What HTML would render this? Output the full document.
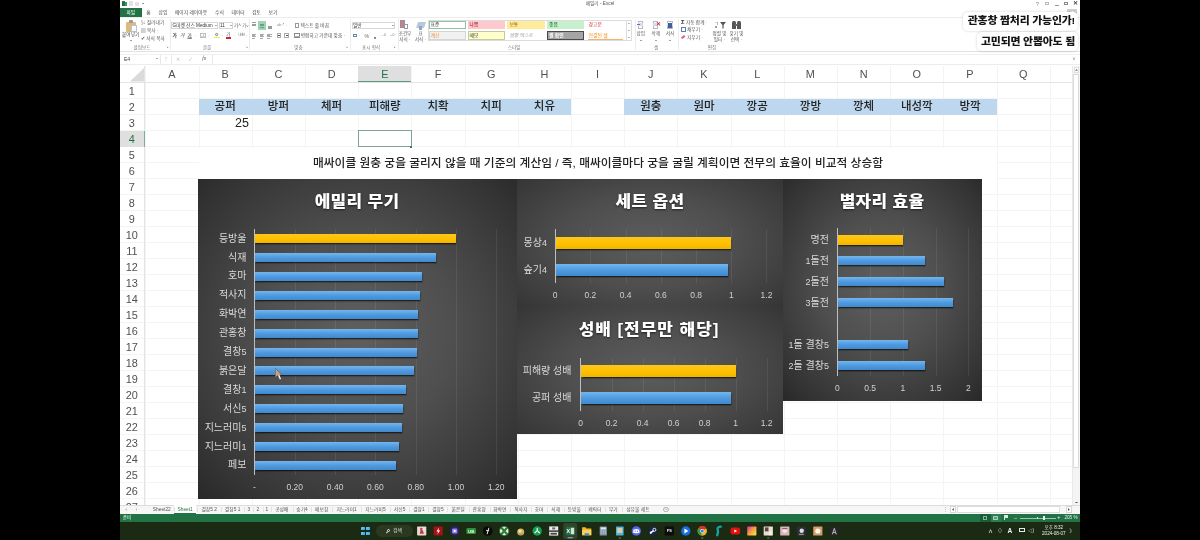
<!DOCTYPE html><html lang="ko"><head><meta charset="utf-8"><title>Excel</title><style>

html,body{margin:0;padding:0;background:#000;}
body{width:1200px;height:540px;position:relative;overflow:hidden;font-family:"Liberation Sans","Noto Sans CJK KR",sans-serif;}
.abs,.abs *{position:absolute;}
#win{position:absolute;left:120px;top:0;width:960px;height:540px;background:#fff;overflow:hidden;}
#fx{position:absolute;left:0;top:0;width:960px;height:540px;filter:blur(.35px);will-change:transform;}
#win div,#win span,#win svg{position:absolute;}
.t{white-space:nowrap;line-height:1;}
.c{transform:translate(-50%,-50%);}
.r{transform:translate(-100%,-50%);}
.l{transform:translate(0,-50%);}
.chart{background:#3a3a3a;overflow:hidden;}
.ctitle{color:#fff;font-weight:900;font-size:15.6px;text-shadow:0 1px 2px rgba(0,0,0,.6);letter-spacing:.27px}
.t.c.ctitle{transform:translate(-50%,-50%) scaleX(1.09);}
.cl{color:#d9d9d9;font-size:10px;}
.al{color:#d0d0d0;font-size:8.5px;}
#win .dg{position:static;font-size:.9em;font-weight:500;}
.bar{box-shadow:.5px 1.5px 1.5px rgba(0,0,0,.6);}
.by{background:linear-gradient(#ffc61a,#ffc000 60%,#f0b400);}
.bb{background:linear-gradient(#74b6ee,#4f9ae0 50%,#4189cc);}
.gl{background:rgba(255,255,255,.075);width:1px;}
.ax{background:#bebebe;width:1px;}
.colh{color:#505050;font-size:10.9px;}
.rowh{color:#505050;font-size:10.9px;}
.cell{color:#222;font-size:11.5px;font-weight:500;}
.rb{color:#555;font-size:4.6px;}

</style></head><body><div id="win"><div id="fx">
<div class="" style="left:0.0px;top:65.5px;width:960.0px;height:17.0px;background:#fff;"></div>
<div class="" style="left:25.4px;top:66.0px;width:1.0px;height:440.0px;background:#f4f4f4;"></div>
<div class="" style="left:78.6px;top:66.0px;width:1.0px;height:440.0px;background:#f4f4f4;"></div>
<div class="" style="left:131.8px;top:66.0px;width:1.0px;height:440.0px;background:#f4f4f4;"></div>
<div class="" style="left:185.0px;top:66.0px;width:1.0px;height:440.0px;background:#f4f4f4;"></div>
<div class="" style="left:238.2px;top:66.0px;width:1.0px;height:440.0px;background:#f4f4f4;"></div>
<div class="" style="left:291.4px;top:66.0px;width:1.0px;height:440.0px;background:#f4f4f4;"></div>
<div class="" style="left:344.6px;top:66.0px;width:1.0px;height:440.0px;background:#f4f4f4;"></div>
<div class="" style="left:397.8px;top:66.0px;width:1.0px;height:440.0px;background:#f4f4f4;"></div>
<div class="" style="left:451.0px;top:66.0px;width:1.0px;height:440.0px;background:#f4f4f4;"></div>
<div class="" style="left:504.2px;top:66.0px;width:1.0px;height:440.0px;background:#f4f4f4;"></div>
<div class="" style="left:557.4px;top:66.0px;width:1.0px;height:440.0px;background:#f4f4f4;"></div>
<div class="" style="left:610.6px;top:66.0px;width:1.0px;height:440.0px;background:#f4f4f4;"></div>
<div class="" style="left:663.8px;top:66.0px;width:1.0px;height:440.0px;background:#f4f4f4;"></div>
<div class="" style="left:717.0px;top:66.0px;width:1.0px;height:440.0px;background:#f4f4f4;"></div>
<div class="" style="left:770.2px;top:66.0px;width:1.0px;height:440.0px;background:#f4f4f4;"></div>
<div class="" style="left:823.4px;top:66.0px;width:1.0px;height:440.0px;background:#f4f4f4;"></div>
<div class="" style="left:876.6px;top:66.0px;width:1.0px;height:440.0px;background:#f4f4f4;"></div>
<div class="" style="left:929.8px;top:66.0px;width:1.0px;height:440.0px;background:#f4f4f4;"></div>
<div class="" style="left:0.0px;top:82.0px;width:953.0px;height:1.0px;background:#f4f4f4;"></div>
<div class="" style="left:0.0px;top:98.0px;width:953.0px;height:1.0px;background:#f4f4f4;"></div>
<div class="" style="left:0.0px;top:114.0px;width:953.0px;height:1.0px;background:#f4f4f4;"></div>
<div class="" style="left:0.0px;top:130.0px;width:953.0px;height:1.0px;background:#f4f4f4;"></div>
<div class="" style="left:0.0px;top:146.0px;width:953.0px;height:1.0px;background:#f4f4f4;"></div>
<div class="" style="left:0.0px;top:162.0px;width:953.0px;height:1.0px;background:#f4f4f4;"></div>
<div class="" style="left:0.0px;top:178.0px;width:953.0px;height:1.0px;background:#f4f4f4;"></div>
<div class="" style="left:0.0px;top:194.0px;width:953.0px;height:1.0px;background:#f4f4f4;"></div>
<div class="" style="left:0.0px;top:210.0px;width:953.0px;height:1.0px;background:#f4f4f4;"></div>
<div class="" style="left:0.0px;top:226.0px;width:953.0px;height:1.0px;background:#f4f4f4;"></div>
<div class="" style="left:0.0px;top:242.0px;width:953.0px;height:1.0px;background:#f4f4f4;"></div>
<div class="" style="left:0.0px;top:258.0px;width:953.0px;height:1.0px;background:#f4f4f4;"></div>
<div class="" style="left:0.0px;top:274.0px;width:953.0px;height:1.0px;background:#f4f4f4;"></div>
<div class="" style="left:0.0px;top:290.0px;width:953.0px;height:1.0px;background:#f4f4f4;"></div>
<div class="" style="left:0.0px;top:306.0px;width:953.0px;height:1.0px;background:#f4f4f4;"></div>
<div class="" style="left:0.0px;top:322.0px;width:953.0px;height:1.0px;background:#f4f4f4;"></div>
<div class="" style="left:0.0px;top:338.0px;width:953.0px;height:1.0px;background:#f4f4f4;"></div>
<div class="" style="left:0.0px;top:354.0px;width:953.0px;height:1.0px;background:#f4f4f4;"></div>
<div class="" style="left:0.0px;top:370.0px;width:953.0px;height:1.0px;background:#f4f4f4;"></div>
<div class="" style="left:0.0px;top:386.0px;width:953.0px;height:1.0px;background:#f4f4f4;"></div>
<div class="" style="left:0.0px;top:402.0px;width:953.0px;height:1.0px;background:#f4f4f4;"></div>
<div class="" style="left:0.0px;top:418.0px;width:953.0px;height:1.0px;background:#f4f4f4;"></div>
<div class="" style="left:0.0px;top:434.0px;width:953.0px;height:1.0px;background:#f4f4f4;"></div>
<div class="" style="left:0.0px;top:450.0px;width:953.0px;height:1.0px;background:#f4f4f4;"></div>
<div class="" style="left:0.0px;top:466.0px;width:953.0px;height:1.0px;background:#f4f4f4;"></div>
<div class="" style="left:0.0px;top:482.0px;width:953.0px;height:1.0px;background:#f4f4f4;"></div>
<div class="" style="left:0.0px;top:498.0px;width:953.0px;height:1.0px;background:#f4f4f4;"></div>
<div class="" style="left:0.0px;top:514.0px;width:953.0px;height:1.0px;background:#f4f4f4;"></div>
<div class="" style="left:0.0px;top:81.8px;width:953.0px;height:1.0px;background:#e4e4e4;"></div>
<div class="" style="left:24.4px;top:66.0px;width:1.0px;height:440.0px;background:#e4e4e4;"></div>
<span class="t c colh" style="left:52.0px;top:74.0px;">A</span>
<span class="t c colh" style="left:105.2px;top:74.0px;">B</span>
<span class="t c colh" style="left:158.4px;top:74.0px;">C</span>
<span class="t c colh" style="left:211.6px;top:74.0px;">D</span>
<div class="" style="left:238.2px;top:66.0px;width:53.2px;height:16.3px;background:#dfdfdf;border-bottom:1px solid #5f9a7c;box-sizing:border-box;"></div>
<span class="t c colh" style="left:264.8px;top:74.0px;color:#217346;font-weight:500;">E</span>
<span class="t c colh" style="left:318.0px;top:74.0px;">F</span>
<span class="t c colh" style="left:371.2px;top:74.0px;">G</span>
<span class="t c colh" style="left:424.4px;top:74.0px;">H</span>
<span class="t c colh" style="left:477.6px;top:74.0px;">I</span>
<span class="t c colh" style="left:530.8px;top:74.0px;">J</span>
<span class="t c colh" style="left:584.0px;top:74.0px;">K</span>
<span class="t c colh" style="left:637.2px;top:74.0px;">L</span>
<span class="t c colh" style="left:690.4px;top:74.0px;">M</span>
<span class="t c colh" style="left:743.6px;top:74.0px;">N</span>
<span class="t c colh" style="left:796.8px;top:74.0px;">O</span>
<span class="t c colh" style="left:850.0px;top:74.0px;">P</span>
<span class="t c colh" style="left:903.2px;top:74.0px;">Q</span>
<span class="t c rowh" style="left:11.8px;top:90.8px;">1</span>
<span class="t c rowh" style="left:11.8px;top:106.8px;">2</span>
<span class="t c rowh" style="left:11.8px;top:122.8px;">3</span>
<div class="" style="left:0.0px;top:130.5px;width:24.5px;height:16.0px;background:#dfdfdf;border-right:1px solid #7fae95;box-sizing:border-box;"></div>
<span class="t c rowh" style="left:11.8px;top:138.8px;color:#217346;font-weight:500;">4</span>
<span class="t c rowh" style="left:11.8px;top:154.8px;">5</span>
<span class="t c rowh" style="left:11.8px;top:170.8px;">6</span>
<span class="t c rowh" style="left:11.8px;top:186.8px;">7</span>
<span class="t c rowh" style="left:11.8px;top:202.8px;">8</span>
<span class="t c rowh" style="left:11.8px;top:218.8px;">9</span>
<span class="t c rowh" style="left:11.8px;top:234.8px;">10</span>
<span class="t c rowh" style="left:11.8px;top:250.8px;">11</span>
<span class="t c rowh" style="left:11.8px;top:266.8px;">12</span>
<span class="t c rowh" style="left:11.8px;top:282.8px;">13</span>
<span class="t c rowh" style="left:11.8px;top:298.8px;">14</span>
<span class="t c rowh" style="left:11.8px;top:314.8px;">15</span>
<span class="t c rowh" style="left:11.8px;top:330.8px;">16</span>
<span class="t c rowh" style="left:11.8px;top:346.8px;">17</span>
<span class="t c rowh" style="left:11.8px;top:362.8px;">18</span>
<span class="t c rowh" style="left:11.8px;top:378.8px;">19</span>
<span class="t c rowh" style="left:11.8px;top:394.8px;">20</span>
<span class="t c rowh" style="left:11.8px;top:410.8px;">21</span>
<span class="t c rowh" style="left:11.8px;top:426.8px;">22</span>
<span class="t c rowh" style="left:11.8px;top:442.8px;">23</span>
<span class="t c rowh" style="left:11.8px;top:458.8px;">24</span>
<span class="t c rowh" style="left:11.8px;top:474.8px;">25</span>
<span class="t c rowh" style="left:11.8px;top:490.8px;">26</span>
<span class="t c rowh" style="left:11.8px;top:506.8px;">27</span>
<svg style="left:9.8px;top:68.4px" width="14" height="13.4" viewBox="0 0 14 13.4"><path d="M14 0V13.4H0Z" fill="#dadada"/></svg>
<div class="" style="left:78.6px;top:98.8px;width:372.4px;height:16.0px;background:#bdd7ee;"></div>
<div class="" style="left:504.2px;top:98.8px;width:372.4px;height:16.0px;background:#bdd7ee;"></div>
<span class="t c cell" style="left:105.2px;top:107.0px;">공퍼</span>
<span class="t c cell" style="left:158.4px;top:107.0px;">방퍼</span>
<span class="t c cell" style="left:211.6px;top:107.0px;">체퍼</span>
<span class="t c cell" style="left:264.8px;top:107.0px;">피해량</span>
<span class="t c cell" style="left:318.0px;top:107.0px;">치확</span>
<span class="t c cell" style="left:371.2px;top:107.0px;">치피</span>
<span class="t c cell" style="left:424.4px;top:107.0px;">치유</span>
<span class="t c cell" style="left:530.8px;top:107.0px;">원충</span>
<span class="t c cell" style="left:584.0px;top:107.0px;">원마</span>
<span class="t c cell" style="left:637.2px;top:107.0px;">깡공</span>
<span class="t c cell" style="left:690.4px;top:107.0px;">깡방</span>
<span class="t c cell" style="left:743.6px;top:107.0px;">깡체</span>
<span class="t c cell" style="left:796.8px;top:107.0px;">내성깍</span>
<span class="t c cell" style="left:850.0px;top:107.0px;">방깍</span>
<span class="t r cell" style="left:129.0px;top:123.0px;font-size:12.5px;font-weight:400;">25</span>
<div class="" style="left:79.4px;top:147.5px;width:797.2px;height:31.0px;background:#fff;"></div>
<span class="t c cell" style="left:478.0px;top:162.7px;font-size:11.75px;">매싸이클 원충 궁을 굴리지 않을 때 기준의 계산임 / 즉, 매싸이클마다 궁을 굴릴 계획이면 전무의 효율이 비교적 상승함</span>
<div class="" style="left:237.7px;top:130.0px;width:54.2px;height:17.0px;border:1px solid #7fa391;box-sizing:border-box;background:#fff;"></div>
<div class="" style="left:290.4px;top:145.5px;width:2.0px;height:2.0px;background:#3f7a5a;"></div>
<div class="chart" style="left:78.3px;top:178.5px;width:319.0px;height:320.0px;background:radial-gradient(ellipse 75% 75% at 50% 48%,#5f5f5f 0%,#4f4f4f 40%,#333333 82%,#252525 100%);">
<span class="t c ctitle" style="left:158.7px;top:23.0px;">에밀리 무기</span>
<div class="gl" style="left:96.5px;top:50.5px;width:1.0px;height:246.0px;"></div>
<div class="gl" style="left:136.8px;top:50.5px;width:1.0px;height:246.0px;"></div>
<div class="gl" style="left:177.1px;top:50.5px;width:1.0px;height:246.0px;"></div>
<div class="gl" style="left:217.4px;top:50.5px;width:1.0px;height:246.0px;"></div>
<div class="gl" style="left:257.7px;top:50.5px;width:1.0px;height:246.0px;"></div>
<div class="gl" style="left:298.0px;top:50.5px;width:1.0px;height:246.0px;"></div>
<div class="bar by" style="left:56.2px;top:55.6px;width:201.5px;height:9.0px;"></div>
<span class="t r cl" style="left:48.2px;top:60.1px;">등방울</span>
<div class="bar bb" style="left:56.2px;top:74.5px;width:181.1px;height:9.0px;"></div>
<span class="t r cl" style="left:48.2px;top:79.0px;">식재</span>
<div class="bar bb" style="left:56.2px;top:93.4px;width:167.5px;height:9.0px;"></div>
<span class="t r cl" style="left:48.2px;top:97.9px;">호마</span>
<div class="bar bb" style="left:56.2px;top:112.3px;width:165.3px;height:9.0px;"></div>
<span class="t r cl" style="left:48.2px;top:116.8px;">적사지</span>
<div class="bar bb" style="left:56.2px;top:131.2px;width:163.5px;height:9.0px;"></div>
<span class="t r cl" style="left:48.2px;top:135.7px;">화박연</span>
<div class="bar bb" style="left:56.2px;top:150.1px;width:163.5px;height:9.0px;"></div>
<span class="t r cl" style="left:48.2px;top:154.6px;">관홍창</span>
<div class="bar bb" style="left:56.2px;top:169.0px;width:162.2px;height:9.0px;"></div>
<span class="t r cl" style="left:48.2px;top:173.5px;">결창<b class="dg">5</b></span>
<div class="bar bb" style="left:56.2px;top:187.9px;width:159.7px;height:9.0px;"></div>
<span class="t r cl" style="left:48.2px;top:192.4px;">붉은달</span>
<div class="bar bb" style="left:56.2px;top:206.8px;width:151.5px;height:9.0px;"></div>
<span class="t r cl" style="left:48.2px;top:211.3px;">결창<b class="dg">1</b></span>
<div class="bar bb" style="left:56.2px;top:225.7px;width:148.3px;height:9.0px;"></div>
<span class="t r cl" style="left:48.2px;top:230.2px;">서신<b class="dg">5</b></span>
<div class="bar bb" style="left:56.2px;top:244.6px;width:147.7px;height:9.0px;"></div>
<span class="t r cl" style="left:48.2px;top:249.1px;">지느러미<b class="dg">5</b></span>
<div class="bar bb" style="left:56.2px;top:263.5px;width:144.5px;height:9.0px;"></div>
<span class="t r cl" style="left:48.2px;top:268.0px;">지느러미<b class="dg">1</b></span>
<div class="bar bb" style="left:56.2px;top:282.4px;width:141.1px;height:9.0px;"></div>
<span class="t r cl" style="left:48.2px;top:286.9px;">페보</span>
<div class="ax" style="left:55.7px;top:50.5px;width:1.0px;height:246.0px;"></div>
<span class="t c al" style="left:56.2px;top:308.0px;">-</span>
<span class="t c al" style="left:96.5px;top:308.0px;">0.20</span>
<span class="t c al" style="left:136.8px;top:308.0px;">0.40</span>
<span class="t c al" style="left:177.1px;top:308.0px;">0.60</span>
<span class="t c al" style="left:217.4px;top:308.0px;">0.80</span>
<span class="t c al" style="left:257.7px;top:308.0px;">1.00</span>
<span class="t c al" style="left:298.0px;top:308.0px;">1.20</span>
</div>
<div class="chart" style="left:397.3px;top:178.5px;width:266.0px;height:127.0px;background:radial-gradient(ellipse 78% 85% at 50% 50%,#5d5d5d 0%,#4e4e4e 42%,#373737 84%,#2b2b2b 100%);">
<span class="t c ctitle" style="left:132.7px;top:23.1px;">세트 옵션</span>
<div class="gl" style="left:73.1px;top:50.5px;width:1.0px;height:54.0px;"></div>
<div class="gl" style="left:108.3px;top:50.5px;width:1.0px;height:54.0px;"></div>
<div class="gl" style="left:143.6px;top:50.5px;width:1.0px;height:54.0px;"></div>
<div class="gl" style="left:178.8px;top:50.5px;width:1.0px;height:54.0px;"></div>
<div class="gl" style="left:214.0px;top:50.5px;width:1.0px;height:54.0px;"></div>
<div class="gl" style="left:249.2px;top:50.5px;width:1.0px;height:54.0px;"></div>
<div class="bar by" style="left:37.9px;top:58.5px;width:176.1px;height:12.0px;"></div>
<div class="bar bb" style="left:37.9px;top:85.0px;width:173.0px;height:12.0px;"></div>
<span class="t r cl" style="left:29.7px;top:64.5px;">몽상<b class="dg">4</b></span>
<span class="t r cl" style="left:29.7px;top:91.0px;">숲기<b class="dg">4</b></span>
<div class="ax" style="left:37.4px;top:50.5px;width:1.0px;height:54.0px;"></div>
<span class="t c al" style="left:37.9px;top:116.5px;">0</span>
<span class="t c al" style="left:73.1px;top:116.5px;">0.2</span>
<span class="t c al" style="left:108.3px;top:116.5px;">0.4</span>
<span class="t c al" style="left:143.6px;top:116.5px;">0.6</span>
<span class="t c al" style="left:178.8px;top:116.5px;">0.8</span>
<span class="t c al" style="left:214.0px;top:116.5px;">1</span>
<span class="t c al" style="left:249.2px;top:116.5px;">1.2</span>
</div>
<div class="chart" style="left:397.3px;top:305.5px;width:266.0px;height:128.6px;background:radial-gradient(ellipse 78% 85% at 50% 50%,#5d5d5d 0%,#4e4e4e 42%,#373737 84%,#2b2b2b 100%);">
<span class="t c ctitle" style="left:132.2px;top:24.3px;letter-spacing:.87px;">성배 [전무만 해당]</span>
<div class="gl" style="left:94.3px;top:52.0px;width:1.0px;height:53.0px;"></div>
<div class="gl" style="left:125.3px;top:52.0px;width:1.0px;height:53.0px;"></div>
<div class="gl" style="left:156.3px;top:52.0px;width:1.0px;height:53.0px;"></div>
<div class="gl" style="left:187.3px;top:52.0px;width:1.0px;height:53.0px;"></div>
<div class="gl" style="left:218.3px;top:52.0px;width:1.0px;height:53.0px;"></div>
<div class="gl" style="left:249.3px;top:52.0px;width:1.0px;height:53.0px;"></div>
<div class="bar by" style="left:63.3px;top:59.0px;width:155.4px;height:12.3px;"></div>
<div class="bar bb" style="left:63.3px;top:86.0px;width:150.1px;height:12.5px;"></div>
<span class="t r cl" style="left:54.2px;top:65.0px;">피해량 성배</span>
<span class="t r cl" style="left:54.2px;top:92.2px;">공퍼 성배</span>
<div class="ax" style="left:62.8px;top:52.0px;width:1.0px;height:53.0px;"></div>
<span class="t c al" style="left:63.3px;top:117.1px;">0</span>
<span class="t c al" style="left:94.3px;top:117.1px;">0.2</span>
<span class="t c al" style="left:125.3px;top:117.1px;">0.4</span>
<span class="t c al" style="left:156.3px;top:117.1px;">0.6</span>
<span class="t c al" style="left:187.3px;top:117.1px;">0.8</span>
<span class="t c al" style="left:218.3px;top:117.1px;">1</span>
<span class="t c al" style="left:249.3px;top:117.1px;">1.2</span>
</div>
<div class="chart" style="left:663.3px;top:178.5px;width:198.3px;height:222.5px;background:radial-gradient(ellipse 75% 75% at 50% 48%,#5f5f5f 0%,#4f4f4f 40%,#333333 82%,#252525 100%);">
<span class="t c ctitle" style="left:98.7px;top:23.3px;">별자리 효율</span>
<div class="gl" style="left:86.8px;top:49.5px;width:1.0px;height:147.5px;"></div>
<div class="gl" style="left:119.6px;top:49.5px;width:1.0px;height:147.5px;"></div>
<div class="gl" style="left:152.4px;top:49.5px;width:1.0px;height:147.5px;"></div>
<div class="gl" style="left:185.2px;top:49.5px;width:1.0px;height:147.5px;"></div>
<div class="bar by" style="left:54.0px;top:56.5px;width:65.8px;height:9.6px;"></div>
<span class="t r cl" style="left:45.7px;top:61.3px;">명전</span>
<div class="bar bb" style="left:54.0px;top:77.4px;width:87.6px;height:9.6px;"></div>
<span class="t r cl" style="left:45.7px;top:82.2px;"><b class="dg">1</b>돌전</span>
<div class="bar bb" style="left:54.0px;top:98.4px;width:106.5px;height:9.6px;"></div>
<span class="t r cl" style="left:45.7px;top:103.2px;"><b class="dg">2</b>돌전</span>
<div class="bar bb" style="left:54.0px;top:119.3px;width:115.6px;height:9.6px;"></div>
<span class="t r cl" style="left:45.7px;top:124.1px;"><b class="dg">3</b>돌전</span>
<div class="bar bb" style="left:54.0px;top:161.2px;width:71.1px;height:9.6px;"></div>
<span class="t r cl" style="left:45.7px;top:166.1px;"><b class="dg">1</b>돌 결창<b class="dg">5</b></span>
<div class="bar bb" style="left:54.0px;top:182.2px;width:87.3px;height:9.6px;"></div>
<span class="t r cl" style="left:45.7px;top:187.0px;"><b class="dg">2</b>돌 결창<b class="dg">5</b></span>
<div class="ax" style="left:53.5px;top:49.5px;width:1.0px;height:147.5px;"></div>
<span class="t c al" style="left:54.0px;top:209.5px;">0</span>
<span class="t c al" style="left:86.8px;top:209.5px;">0.5</span>
<span class="t c al" style="left:119.6px;top:209.5px;">1</span>
<span class="t c al" style="left:152.4px;top:209.5px;">1.5</span>
<span class="t c al" style="left:185.2px;top:209.5px;">2</span>
</div>
<div class="" style="left:0.0px;top:0.0px;width:960.0px;height:65.5px;background:#fff;"></div>
<div class="" style="left:1.5px;top:1.0px;width:3.6px;height:5.4px;background:#1e7145;border-radius:.5px;"></div>
<div class="" style="left:4.5px;top:1.6px;width:2.2px;height:4.2px;background:#3c9a68;"></div>
<div class="" style="left:8.5px;top:1.2px;width:4.5px;height:5.0px;background:#dfe3e6;"></div>
<div class="" style="left:15.0px;top:1.6px;width:3.5px;height:4.0px;background:#e4e0e6;"></div>
<svg style="left:21.90px;top:2.90px" width="2.2" height="1.4" viewBox="0 0 2.2 1.4"><polygon points="0,0 2.2,0 1.1,1.4" fill="#666"/></svg>
<span class="t c rb" style="left:480.0px;top:3.8px;font-size:4.7px;color:#555;">메일리 - Excel</span>
<span class="t c rb" style="left:917.5px;top:3.7px;font-size:5px;color:#777;">?</span>
<div class="" style="left:925.0px;top:1.8px;width:4.2px;height:3.6px;border:.6px solid #bbb;box-sizing:border-box;"></div>
<div class="" style="left:934.5px;top:5.0px;width:4.0px;height:0.8px;background:#999;"></div>
<div class="" style="left:944.0px;top:2.2px;width:3.6px;height:3.2px;border:.7px solid #888;box-sizing:border-box;"></div>
<span class="t c rb" style="left:955.5px;top:3.7px;font-size:5.5px;color:#444;font-weight:700;">✕</span>
<div class="" style="left:0.0px;top:8.3px;width:21.8px;height:8.6px;background:#217346;"></div>
<span class="t c rb" style="left:10.8px;top:12.7px;color:#fff;font-size:4.8px;">파일</span>
<span class="t c rb" style="left:28.5px;top:12.8px;font-size:4.8px;color:#444;">홈</span>
<span class="t c rb" style="left:43.0px;top:12.8px;font-size:4.8px;color:#444;">삽입</span>
<span class="t c rb" style="left:71.0px;top:12.8px;font-size:4.8px;color:#444;">페이지 레이아웃</span>
<span class="t c rb" style="left:99.5px;top:12.8px;font-size:4.8px;color:#444;">수식</span>
<span class="t c rb" style="left:118.0px;top:12.8px;font-size:4.8px;color:#444;">데이터</span>
<span class="t c rb" style="left:136.3px;top:12.8px;font-size:4.8px;color:#444;">검토</span>
<span class="t c rb" style="left:153.0px;top:12.8px;font-size:4.8px;color:#444;">보기</span>
<div class="" style="left:0.0px;top:16.9px;width:960.0px;height:0.6px;background:#ededed;"></div>
<div class="" style="left:0.0px;top:51.4px;width:960.0px;height:0.7px;background:#e2e2e2;"></div>
<div class="" style="left:49.5px;top:19.0px;width:0.6px;height:31.0px;background:#ececec;"></div>
<div class="" style="left:129.0px;top:19.0px;width:0.6px;height:31.0px;background:#ececec;"></div>
<div class="" style="left:229.5px;top:19.0px;width:0.6px;height:31.0px;background:#ececec;"></div>
<div class="" style="left:277.5px;top:19.0px;width:0.6px;height:31.0px;background:#ececec;"></div>
<div class="" style="left:514.5px;top:19.0px;width:0.6px;height:31.0px;background:#ececec;"></div>
<div class="" style="left:558.0px;top:19.0px;width:0.6px;height:31.0px;background:#ececec;"></div>
<span class="t c rb" style="left:22.0px;top:47.9px;color:#777;font-size:4.6px;">클립보드</span>
<span class="t c rb" style="left:87.0px;top:47.9px;color:#777;font-size:4.6px;">글꼴</span>
<span class="t c rb" style="left:178.5px;top:47.9px;color:#777;font-size:4.6px;">맞춤</span>
<span class="t c rb" style="left:251.0px;top:47.9px;color:#777;font-size:4.6px;">표시 형식</span>
<span class="t c rb" style="left:394.0px;top:47.9px;color:#777;font-size:4.6px;">스타일</span>
<span class="t c rb" style="left:536.0px;top:47.9px;color:#777;font-size:4.6px;">셀</span>
<span class="t c rb" style="left:592.0px;top:47.9px;color:#777;font-size:4.6px;">편집</span>
<span class="t c rb" style="left:47.0px;top:48.2px;font-size:3.6px;color:#999;">↘</span>
<span class="t c rb" style="left:126.5px;top:48.2px;font-size:3.6px;color:#999;">↘</span>
<span class="t c rb" style="left:226.5px;top:48.2px;font-size:3.6px;color:#999;">↘</span>
<span class="t c rb" style="left:274.0px;top:48.2px;font-size:3.6px;color:#999;">↘</span>
<div class="" style="left:6.0px;top:21.5px;width:10.0px;height:10.0px;background:#dcbb7c;border-radius:1px;"></div>
<div class="" style="left:8.7px;top:20.0px;width:4.5px;height:2.6px;background:#9a9a9a;border-radius:1px;"></div>
<div class="" style="left:10.5px;top:24.5px;width:6.5px;height:7.2px;background:#fafcff;border:.5px solid #b7c4d6;box-sizing:border-box;"></div>
<span class="t c rb" style="left:10.7px;top:35.0px;font-size:4.7px;color:#444;">붙여넣기</span>
<svg style="left:9.65px;top:39.60px" width="2.1" height="1.4" viewBox="0 0 2.1 1.4"><polygon points="0,0 2.1,0 1.05,1.4" fill="#666"/></svg>
<span class="t l rb" style="left:21.0px;top:22.5px;font-size:4.7px;color:#555;">✂ 잘라내기</span>
<span class="t l rb" style="left:21.0px;top:30.8px;font-size:4.7px;color:#555;">▤ 복사 ·</span>
<span class="t l rb" style="left:21.0px;top:39.0px;font-size:4.7px;color:#555;">✔ 서식 복사</span>
<div class="" style="left:51.3px;top:21.6px;width:47.0px;height:7.8px;border:.6px solid #d6d6d6;box-sizing:border-box;"></div>
<span class="t l rb" style="left:52.5px;top:25.6px;font-size:4.7px;color:#333;">G마켓 산스 Medium</span>
<svg style="left:95.05px;top:25.20px" width="1.9" height="1.2" viewBox="0 0 1.9 1.2"><polygon points="0,0 1.9,0 0.95,1.2" fill="#666"/></svg>
<div class="" style="left:98.6px;top:21.6px;width:14.6px;height:7.8px;border:.6px solid #d6d6d6;box-sizing:border-box;"></div>
<span class="t l rb" style="left:100.0px;top:25.6px;font-size:4.7px;color:#333;">11</span>
<svg style="left:110.05px;top:25.20px" width="1.9" height="1.2" viewBox="0 0 1.9 1.2"><polygon points="0,0 1.9,0 0.95,1.2" fill="#666"/></svg>
<span class="t c rb" style="left:117.5px;top:25.6px;font-size:4.6px;color:#666;">가˄</span>
<span class="t c rb" style="left:125.5px;top:25.8px;font-size:4.2px;color:#666;">가˅</span>
<span class="t c rb" style="left:54.7px;top:35.8px;font-size:4.8px;color:#444;font-weight:700;">가</span>
<span class="t c rb" style="left:62.2px;top:35.8px;font-size:4.8px;color:#444;font-style:italic;">가</span>
<span class="t c rb" style="left:69.7px;top:35.8px;font-size:4.8px;color:#444;text-decoration:underline;">가</span>
<span class="t c rb" style="left:75.3px;top:35.8px;color:#777;">·</span>
<div class="" style="left:80.2px;top:33.2px;width:5.4px;height:5.2px;border:.6px solid #bbb;box-sizing:border-box;"></div>
<div class="" style="left:82.6px;top:33.2px;width:0.5px;height:5.2px;background:#ccc;"></div>
<div class="" style="left:80.2px;top:35.6px;width:5.4px;height:0.5px;background:#ccc;"></div>
<span class="t c rb" style="left:89.0px;top:35.8px;color:#777;">·</span>
<div class="" style="left:94.2px;top:36.6px;width:5.4px;height:1.9px;background:#f5ef3c;"></div>
<div class="" style="left:95.2px;top:33.0px;width:3.2px;height:3.4px;border:.6px solid #999;box-sizing:border-box;border-radius:1px;transform:rotate(40deg);"></div>
<span class="t c rb" style="left:102.5px;top:35.8px;color:#777;">·</span>
<span class="t c rb" style="left:108.3px;top:34.8px;font-size:4.4px;color:#555;">가</span>
<div class="" style="left:105.8px;top:37.0px;width:5.2px;height:1.8px;background:#d5252b;"></div>
<span class="t c rb" style="left:114.0px;top:35.8px;color:#777;">·</span>
<span class="t c rb" style="left:121.5px;top:35.6px;font-size:3.6px;color:#666;">내천</span>
<span class="t c rb" style="left:126.8px;top:35.8px;color:#777;">·</span>
<div class="" style="left:131.6px;top:22.4px;width:4.4px;height:0.6px;background:#9a9a9a;"></div>
<div class="" style="left:131.6px;top:23.8px;width:4.4px;height:0.6px;background:#9a9a9a;"></div>
<div class="" style="left:131.6px;top:25.2px;width:4.4px;height:0.6px;background:#9a9a9a;"></div>
<div class="" style="left:138.3px;top:21.2px;width:7.6px;height:8.6px;background:#9ed3b6;"></div>
<div class="" style="left:139.8px;top:24.0px;width:4.4px;height:0.6px;background:#6c9f86;"></div>
<div class="" style="left:139.8px;top:25.4px;width:4.4px;height:0.6px;background:#6c9f86;"></div>
<div class="" style="left:139.8px;top:26.8px;width:4.4px;height:0.6px;background:#6c9f86;"></div>
<div class="" style="left:147.5px;top:25.6px;width:4.4px;height:0.6px;background:#9a9a9a;"></div>
<div class="" style="left:147.5px;top:27.0px;width:4.4px;height:0.6px;background:#9a9a9a;"></div>
<div class="" style="left:147.5px;top:28.4px;width:4.4px;height:0.6px;background:#9a9a9a;"></div>
<span class="t c rb" style="left:160.8px;top:25.6px;font-size:3.6px;color:#888;">ab↗</span>
<span class="t c rb" style="left:166.5px;top:25.8px;color:#777;">·</span>
<div class="" style="left:175.0px;top:23.3px;width:4.2px;height:4.4px;border:.6px solid #999;box-sizing:border-box;"></div>
<span class="t l rb" style="left:180.5px;top:25.6px;font-size:4.7px;color:#555;">텍스트 줄 바꿈</span>
<div class="" style="left:131.6px;top:33.6px;width:4.6px;height:0.6px;background:#a8a8a8;"></div>
<div class="" style="left:131.6px;top:35.0px;width:3.2px;height:0.6px;background:#a8a8a8;"></div>
<div class="" style="left:131.6px;top:36.4px;width:4.6px;height:0.6px;background:#a8a8a8;"></div>
<div class="" style="left:131.6px;top:37.8px;width:3.2px;height:0.6px;background:#a8a8a8;"></div>
<div class="" style="left:139.6px;top:33.6px;width:4.6px;height:0.6px;background:#a8a8a8;"></div>
<div class="" style="left:139.6px;top:35.0px;width:3.0px;height:0.6px;background:#a8a8a8;"></div>
<div class="" style="left:139.6px;top:36.4px;width:4.6px;height:0.6px;background:#a8a8a8;"></div>
<div class="" style="left:139.6px;top:37.8px;width:3.0px;height:0.6px;background:#a8a8a8;"></div>
<div class="" style="left:147.3px;top:33.6px;width:4.6px;height:0.6px;background:#a8a8a8;"></div>
<div class="" style="left:147.3px;top:35.0px;width:3.2px;height:0.6px;background:#a8a8a8;"></div>
<div class="" style="left:147.3px;top:36.4px;width:4.6px;height:0.6px;background:#a8a8a8;"></div>
<div class="" style="left:147.3px;top:37.8px;width:3.2px;height:0.6px;background:#a8a8a8;"></div>
<div class="" style="left:156.8px;top:33.4px;width:4.6px;height:4.8px;border:.6px solid #aaa;box-sizing:border-box;"></div>
<div class="" style="left:157.8px;top:35.2px;width:2.0px;height:1.3px;background:#555;"></div>
<div class="" style="left:164.0px;top:33.4px;width:4.6px;height:4.8px;border:.6px solid #aaa;box-sizing:border-box;"></div>
<div class="" style="left:166.0px;top:35.2px;width:2.0px;height:1.3px;background:#555;"></div>
<div class="" style="left:174.4px;top:33.2px;width:5.2px;height:5.2px;border:.6px solid #888;box-sizing:border-box;"></div>
<div class="" style="left:174.4px;top:35.5px;width:5.2px;height:0.5px;background:#aaa;"></div>
<span class="t l rb" style="left:180.8px;top:35.8px;font-size:4.7px;color:#555;">병합하고 가운데 맞춤 ·</span>
<div class="" style="left:231.6px;top:21.6px;width:43.6px;height:7.8px;border:.6px solid #d6d6d6;box-sizing:border-box;"></div>
<span class="t l rb" style="left:233.0px;top:25.6px;font-size:4.7px;color:#333;">일반</span>
<svg style="left:272.05px;top:25.20px" width="1.9" height="1.2" viewBox="0 0 1.9 1.2"><polygon points="0,0 1.9,0 0.95,1.2" fill="#666"/></svg>
<div class="" style="left:232.8px;top:33.6px;width:4.6px;height:3.6px;border:.6px solid #5a8ab8;box-sizing:border-box;"></div>
<span class="t c rb" style="left:239.5px;top:35.8px;color:#777;">·</span>
<span class="t c rb" style="left:246.7px;top:35.8px;font-size:5px;color:#666;">%</span>
<span class="t c rb" style="left:254.8px;top:35.6px;font-size:5px;color:#444;font-weight:700;">❟</span>
<span class="t c rb" style="left:263.3px;top:35.6px;font-size:3.4px;color:#777;">←0</span>
<span class="t c rb" style="left:271.8px;top:35.6px;font-size:3.4px;color:#777;">→0</span>
<div class="" style="left:280.2px;top:20.0px;width:5.2px;height:8.2px;border:.6px solid #a88;box-sizing:border-box;"></div>
<div class="" style="left:281.4px;top:21.0px;width:1.6px;height:6.2px;background:#cf8080;"></div>
<div class="" style="left:283.4px;top:21.0px;width:1.2px;height:6.2px;background:#8094c8;"></div>
<div class="" style="left:284.2px;top:24.0px;width:4.0px;height:4.8px;background:#fff;border:.5px solid #999;box-sizing:border-box;"></div>
<span class="t c rb" style="left:285.0px;top:34.2px;font-size:4.6px;color:#555;">조건부</span>
<span class="t c rb" style="left:285.0px;top:40.3px;font-size:4.6px;color:#555;">서식 ·</span>
<div class="" style="left:296.8px;top:22.0px;width:8.0px;height:6.0px;background:#b9c8dc;transform:skewX(-18deg);"></div>
<div class="" style="left:298.8px;top:26.0px;width:3.6px;height:4.4px;background:#8fa6c2;"></div>
<span class="t c rb" style="left:300.5px;top:34.2px;font-size:4.6px;color:#555;">표</span>
<span class="t c rb" style="left:300.5px;top:40.3px;font-size:4.6px;color:#555;">서식 ·</span>
<div class="" style="left:307.6px;top:19.8px;width:204.0px;height:21.4px;border:.6px solid #dcdcdc;box-sizing:border-box;"></div>
<div class="" style="left:308.6px;top:20.8px;width:37.6px;height:8.6px;background:#fff;border:.8px solid #8fbfa6;box-sizing:border-box;"></div>
<span class="t l rb" style="left:310.6px;top:25.3px;font-size:4.8px;color:#333;">표준</span>
<div class="" style="left:347.6px;top:20.8px;width:37.4px;height:8.4px;background:#ffc7ce;"></div>
<span class="t l rb" style="left:349.6px;top:25.2px;font-size:4.8px;color:#9c0006;">나쁨</span>
<div class="" style="left:387.4px;top:20.8px;width:37.4px;height:8.4px;background:#ffeb9c;"></div>
<span class="t l rb" style="left:389.4px;top:25.2px;font-size:4.8px;color:#9c6500;">보통</span>
<div class="" style="left:427.0px;top:20.8px;width:37.2px;height:8.4px;background:#c6efce;"></div>
<span class="t l rb" style="left:429.0px;top:25.2px;font-size:4.8px;color:#006100;">좋음</span>
<div class="" style="left:466.6px;top:20.8px;width:37.4px;height:8.4px;background:#fff;"></div>
<span class="t l rb" style="left:468.6px;top:25.2px;font-size:4.8px;color:#d0312d;">경고문</span>
<div class="" style="left:308.6px;top:31.0px;width:37.6px;height:8.8px;background:#f1f1f1;border:.5px solid #d4d4d4;box-sizing:border-box;"></div>
<span class="t l rb" style="left:310.6px;top:35.6px;font-size:4.8px;color:#f58a1f;">계산</span>
<div class="" style="left:347.6px;top:31.0px;width:37.4px;height:8.8px;background:#ffffcc;border:.6px solid #c9c9a0;box-sizing:border-box;"></div>
<span class="t l rb" style="left:349.6px;top:35.6px;font-size:4.8px;color:#333;">메모</span>
<div class="" style="left:387.4px;top:31.0px;width:37.4px;height:8.8px;background:#fff;"></div>
<span class="t l rb" style="left:389.4px;top:35.6px;font-size:4.8px;color:#999;font-style:italic;">설명 텍스트</span>
<div class="" style="left:427.0px;top:31.0px;width:37.2px;height:8.8px;background:#a5a5a5;border:1px solid #4a4a4a;box-sizing:border-box;"></div>
<span class="t l rb" style="left:429.0px;top:35.6px;font-size:4.8px;color:#fff;font-weight:700;">셀 확인</span>
<div class="" style="left:466.6px;top:31.0px;width:37.4px;height:8.8px;background:#fff;"></div>
<span class="t l rb" style="left:468.6px;top:35.6px;font-size:4.8px;color:#f08a1a;">연결된 셀</span>
<div class="" style="left:467.6px;top:38.6px;width:35.5px;height:0.9px;background:#f5b36a;"></div>
<div class="" style="left:505.8px;top:19.8px;width:0.6px;height:21.4px;background:#dcdcdc;"></div>
<svg style="left:507.85px;top:22.70px" width="1.9" height="1.2" viewBox="0 0 1.9 1.2"><polygon points="0,0 1.9,0 0.95,1.2" fill="#777"/></svg>
<svg style="left:507.85px;top:29.80px" width="1.9" height="1.2" viewBox="0 0 1.9 1.2"><polygon points="0,0 1.9,0 0.95,1.2" fill="#777"/></svg>
<svg style="left:507.85px;top:36.80px" width="1.9" height="1.2" viewBox="0 0 1.9 1.2"><polygon points="0,0 1.9,0 0.95,1.2" fill="#777"/></svg>
<div class="" style="left:518.2px;top:20.6px;width:5.2px;height:8.6px;border:.6px solid #b8b8c4;box-sizing:border-box;"></div>
<div class="" style="left:518.2px;top:23.4px;width:5.2px;height:3.0px;background:#d5dbea;"></div>
<div class="" style="left:516.6px;top:24.3px;width:3.4px;height:1.0px;background:#5b78a8;"></div>
<div class="" style="left:533.2px;top:20.6px;width:5.2px;height:8.6px;border:.6px solid #b8b8c4;box-sizing:border-box;"></div>
<div class="" style="left:533.2px;top:23.4px;width:5.2px;height:3.0px;background:#d5dbea;"></div>
<span class="t c rb" style="left:538.6px;top:24.8px;font-size:5.5px;color:#d03030;font-weight:700;">✕</span>
<div class="" style="left:547.4px;top:20.6px;width:5.2px;height:8.6px;border:.6px solid #b8b8c4;box-sizing:border-box;"></div>
<div class="" style="left:547.4px;top:23.4px;width:5.2px;height:3.0px;background:#d5dbea;"></div>
<div class="" style="left:548.4px;top:22.6px;width:3.2px;height:5.0px;background:#3f5f96;"></div>
<span class="t c rb" style="left:520.8px;top:34.4px;font-size:4.7px;color:#555;">삽입</span>
<svg style="left:519.80px;top:39.75px" width="2" height="1.3" viewBox="0 0 2 1.3"><polygon points="0,0 2,0 1,1.3" fill="#666"/></svg>
<span class="t c rb" style="left:535.8px;top:34.4px;font-size:4.7px;color:#555;">삭제</span>
<svg style="left:534.80px;top:39.75px" width="2" height="1.3" viewBox="0 0 2 1.3"><polygon points="0,0 2,0 1,1.3" fill="#666"/></svg>
<span class="t c rb" style="left:550.0px;top:34.4px;font-size:4.7px;color:#555;">서식</span>
<svg style="left:549.00px;top:39.75px" width="2" height="1.3" viewBox="0 0 2 1.3"><polygon points="0,0 2,0 1,1.3" fill="#666"/></svg>
<span class="t l rb" style="left:561.0px;top:21.9px;font-size:4.7px;color:#555;"><b style="position:static;color:#333;font-size:6px">Σ</b> 자동 합계 ·</span>
<div class="" style="left:561.0px;top:27.4px;width:4.6px;height:4.6px;border:.6px solid #5a7db0;box-sizing:border-box;"></div>
<span class="t l rb" style="left:567.0px;top:29.9px;font-size:4.7px;color:#555;">채우기 ·</span>
<div class="" style="left:561.0px;top:36.4px;width:4.4px;height:1.6px;background:#e0607a;transform:rotate(-35deg);"></div>
<span class="t l rb" style="left:567.0px;top:37.6px;font-size:4.7px;color:#555;">지우기 ·</span>
<span class="t c rb" style="left:596.5px;top:22.6px;font-size:5px;color:#666;">ㄱ</span>
<div class="" style="left:595.0px;top:25.6px;width:2.2px;height:2.2px;background:#a060a0;border-radius:50%;"></div>
<svg style="left:599.8px;top:21.5px" width="6" height="7" viewBox="0 0 6 7"><path d="M0 0H6L3.6 3V6.5H2.4V3Z" fill="#555"/></svg>
<span class="t c rb" style="left:599.5px;top:34.3px;font-size:4.6px;color:#555;">정렬 및</span>
<span class="t c rb" style="left:599.5px;top:40.3px;font-size:4.6px;color:#555;">필터 ·</span>
<div class="" style="left:612.0px;top:20.6px;width:3.6px;height:8.0px;background:#555;border-radius:1.5px 1.5px .5px .5px;"></div>
<div class="" style="left:617.0px;top:20.6px;width:3.6px;height:8.0px;background:#555;border-radius:1.5px 1.5px .5px .5px;"></div>
<div class="" style="left:614.8px;top:23.5px;width:3.0px;height:2.4px;background:#666;"></div>
<span class="t c rb" style="left:616.5px;top:34.3px;font-size:4.6px;color:#555;">찾기 및</span>
<span class="t c rb" style="left:616.5px;top:40.3px;font-size:4.6px;color:#555;">선택 ·</span>
<div class="" style="left:947.0px;top:9.0px;width:10.0px;height:6.0px;background:#cfcfcf;"></div>
<div class="" style="left:950.5px;top:11.0px;width:3.0px;height:4.0px;background:#fff;border-radius:1.5px 1.5px 0 0;"></div>
<div class="" style="left:843.0px;top:11.5px;width:114.5px;height:19.0px;background:#fff;border-radius:5px;box-shadow:0 0 3px rgba(0,0,0,.18);"></div>
<div class="" style="left:857.0px;top:32.0px;width:100.5px;height:19.0px;background:#fff;border-radius:5px;box-shadow:0 0 3px rgba(0,0,0,.18);"></div>
<span class="t r " style="left:954.5px;top:21.0px;font-size:9.7px;font-weight:900;color:#151515;letter-spacing:-.18px;transform-origin:100% 50%;transform:translate(-100%,-50%) scaleX(1.124);">관홍창 짬처리 가능인가!</span>
<span class="t r " style="left:955.0px;top:42.2px;font-size:9.7px;font-weight:900;color:#151515;letter-spacing:-.18px;transform-origin:100% 50%;transform:translate(-100%,-50%) scaleX(1.124);">고민되면 안뽑아도 됨</span>
<div class="" style="left:0.0px;top:63.6px;width:960.0px;height:0.7px;background:#ededed;"></div>
<div class="" style="left:0.0px;top:53.6px;width:960.0px;height:0.6px;background:#f0f0f0;"></div>
<span class="t l rb" style="left:4.0px;top:59.2px;font-size:5px;color:#444;">E4</span>
<svg style="left:35.50px;top:58.35px" width="2" height="1.3" viewBox="0 0 2 1.3"><polygon points="0,0 2,0 1,1.3" fill="#777"/></svg>
<div class="" style="left:39.6px;top:54.5px;width:0.6px;height:9.0px;background:#e8e8e8;"></div>
<span class="t c rb" style="left:45.5px;top:59.0px;font-size:4px;color:#aaa;">⋮</span>
<div class="" style="left:51.0px;top:54.5px;width:0.6px;height:9.0px;background:#e8e8e8;"></div>
<span class="t c rb" style="left:58.0px;top:59.0px;font-size:5px;color:#bbb;">✕</span>
<span class="t c rb" style="left:70.5px;top:59.0px;font-size:5px;color:#bbb;">✓</span>
<span class="t c rb" style="left:84.3px;top:59.0px;font-size:5.2px;color:#555;"><i style="position:static;font-family:'Liberation Serif',serif">f</i>x</span>
<div class="" style="left:91.5px;top:54.5px;width:0.6px;height:9.0px;background:#e8e8e8;"></div>
<span class="t c rb" style="left:954.0px;top:59.0px;font-size:5px;color:#666;">˅</span>
<div class="" style="left:952.4px;top:65.5px;width:7.6px;height:440.0px;background:#f4f4f4;border-left:.6px solid #e8e8e8;box-sizing:border-box;"></div>
<div class="" style="left:953.6px;top:67.0px;width:5.4px;height:6.0px;background:#fff;border:.5px solid #e0e0e0;box-sizing:border-box;"></div>
<svg style="left:954.80px;top:69.10px" width="3" height="1.8" viewBox="0 0 3 1.8"><polygon points="0,1.8 3,1.8 1.5,0" fill="#777"/></svg>
<div class="" style="left:953.4px;top:74.0px;width:5.8px;height:394.0px;background:#fff;border:.6px solid #dcdcdc;box-sizing:border-box;"></div>
<svg style="left:954.80px;top:501.70px" width="3" height="1.8" viewBox="0 0 3 1.8"><polygon points="0,0 3,0 1.5,1.8" fill="#555"/></svg>
<div class="" style="left:0.0px;top:505.2px;width:960.0px;height:8.8px;background:#f6f6f6;border-top:.7px solid #dcdcdc;box-sizing:border-box;"></div>
<svg style="left:5.10px;top:508.00px" width="1.8" height="3" viewBox="0 0 1.8 3"><polygon points="1.8,0 1.8,3 0,1.5" fill="#c4c4c4"/></svg>
<svg style="left:15.60px;top:508.00px" width="1.8" height="3" viewBox="0 0 1.8 3"><polygon points="0,0 0,3 1.8,1.5" fill="#c4c4c4"/></svg>
<span class="t c rb" style="left:41.8px;top:509.9px;font-size:4.8px;color:#555;">Sheet22</span>
<div class="" style="left:54.2px;top:505.2px;width:22.0px;height:8.8px;background:#fff;border-bottom:1.2px solid #217346;box-sizing:border-box;"></div>
<span class="t c rb" style="left:65.2px;top:509.9px;font-size:4.8px;color:#217346;">Sheet1</span>
<div class="" style="left:54.3px;top:506.8px;width:0.5px;height:5.4px;background:#e2e2e2;"></div>
<span class="t c rb" style="left:89.2px;top:509.9px;font-size:4.8px;color:#555;">결창5 2</span>
<div class="" style="left:76.8px;top:506.8px;width:0.5px;height:5.4px;background:#e2e2e2;"></div>
<span class="t c rb" style="left:112.6px;top:509.9px;font-size:4.8px;color:#555;">결창5 1</span>
<div class="" style="left:100.9px;top:506.8px;width:0.5px;height:5.4px;background:#e2e2e2;"></div>
<span class="t c rb" style="left:128.8px;top:509.9px;font-size:4.8px;color:#555;">3</span>
<div class="" style="left:124.2px;top:506.8px;width:0.5px;height:5.4px;background:#e2e2e2;"></div>
<span class="t c rb" style="left:137.9px;top:509.9px;font-size:4.8px;color:#555;">2</span>
<div class="" style="left:133.3px;top:506.8px;width:0.5px;height:5.4px;background:#e2e2e2;"></div>
<span class="t c rb" style="left:146.9px;top:509.9px;font-size:4.8px;color:#555;">1</span>
<div class="" style="left:142.5px;top:506.8px;width:0.5px;height:5.4px;background:#e2e2e2;"></div>
<span class="t c rb" style="left:161.8px;top:509.9px;font-size:4.8px;color:#555;">공성배</span>
<div class="" style="left:151.2px;top:506.8px;width:0.5px;height:5.4px;background:#e2e2e2;"></div>
<span class="t c rb" style="left:182.0px;top:509.9px;font-size:4.8px;color:#555;">숲기4</span>
<div class="" style="left:172.6px;top:506.8px;width:0.5px;height:5.4px;background:#e2e2e2;"></div>
<span class="t c rb" style="left:201.7px;top:509.9px;font-size:4.8px;color:#555;">메보창</span>
<div class="" style="left:191.4px;top:506.8px;width:0.5px;height:5.4px;background:#e2e2e2;"></div>
<span class="t c rb" style="left:226.6px;top:509.9px;font-size:4.8px;color:#555;">지느러미1</span>
<div class="" style="left:212.2px;top:506.8px;width:0.5px;height:5.4px;background:#e2e2e2;"></div>
<span class="t c rb" style="left:255.5px;top:509.9px;font-size:4.8px;color:#555;">지느러미5</span>
<div class="" style="left:240.9px;top:506.8px;width:0.5px;height:5.4px;background:#e2e2e2;"></div>
<span class="t c rb" style="left:279.6px;top:509.9px;font-size:4.8px;color:#555;">서신5</span>
<div class="" style="left:270.0px;top:506.8px;width:0.5px;height:5.4px;background:#e2e2e2;"></div>
<span class="t c rb" style="left:298.9px;top:509.9px;font-size:4.8px;color:#555;">결창1</span>
<div class="" style="left:289.4px;top:506.8px;width:0.5px;height:5.4px;background:#e2e2e2;"></div>
<span class="t c rb" style="left:317.9px;top:509.9px;font-size:4.8px;color:#555;">결창5</span>
<div class="" style="left:308.4px;top:506.8px;width:0.5px;height:5.4px;background:#e2e2e2;"></div>
<span class="t c rb" style="left:338.2px;top:509.9px;font-size:4.8px;color:#555;">붉은달</span>
<div class="" style="left:327.4px;top:506.8px;width:0.5px;height:5.4px;background:#e2e2e2;"></div>
<span class="t c rb" style="left:359.2px;top:509.9px;font-size:4.8px;color:#555;">관홍창</span>
<div class="" style="left:348.7px;top:506.8px;width:0.5px;height:5.4px;background:#e2e2e2;"></div>
<span class="t c rb" style="left:379.8px;top:509.9px;font-size:4.8px;color:#555;">화박연</span>
<div class="" style="left:369.5px;top:506.8px;width:0.5px;height:5.4px;background:#e2e2e2;"></div>
<span class="t c rb" style="left:400.8px;top:509.9px;font-size:4.8px;color:#555;">적사지</span>
<div class="" style="left:390.3px;top:506.8px;width:0.5px;height:5.4px;background:#e2e2e2;"></div>
<span class="t c rb" style="left:419.1px;top:509.9px;font-size:4.8px;color:#555;">호마</span>
<div class="" style="left:411.3px;top:506.8px;width:0.5px;height:5.4px;background:#e2e2e2;"></div>
<span class="t c rb" style="left:435.7px;top:509.9px;font-size:4.8px;color:#555;">식재</span>
<div class="" style="left:427.4px;top:506.8px;width:0.5px;height:5.4px;background:#e2e2e2;"></div>
<span class="t c rb" style="left:454.2px;top:509.9px;font-size:4.8px;color:#555;">등방울</span>
<div class="" style="left:443.7px;top:506.8px;width:0.5px;height:5.4px;background:#e2e2e2;"></div>
<span class="t c rb" style="left:474.8px;top:509.9px;font-size:4.8px;color:#555;">캐릭터</span>
<div class="" style="left:464.5px;top:506.8px;width:0.5px;height:5.4px;background:#e2e2e2;"></div>
<span class="t c rb" style="left:493.3px;top:509.9px;font-size:4.8px;color:#555;">무기</span>
<div class="" style="left:485.3px;top:506.8px;width:0.5px;height:5.4px;background:#e2e2e2;"></div>
<span class="t c rb" style="left:517.9px;top:509.9px;font-size:4.8px;color:#555;">성유물 세트</span>
<div class="" style="left:501.6px;top:506.8px;width:0.5px;height:5.4px;background:#e2e2e2;"></div>
<div class="" style="left:543.3px;top:506.8px;width:5.4px;height:5.4px;border:.6px solid #aaa;border-radius:50%;box-sizing:border-box;"></div>
<span class="t c rb" style="left:546.0px;top:509.4px;font-size:4.4px;color:#888;">+</span>
<span class="t c rb" style="left:825.7px;top:509.5px;font-size:4.5px;color:#999;">⋮</span>
<div class="" style="left:830.4px;top:506.2px;width:5.6px;height:6.4px;background:#fff;border:.5px solid #d6d6d6;box-sizing:border-box;"></div>
<svg style="left:832.30px;top:507.90px" width="1.8" height="3" viewBox="0 0 1.8 3"><polygon points="1.8,0 1.8,3 0,1.5" fill="#555"/></svg>
<div class="" style="left:837.0px;top:506.2px;width:102.6px;height:6.4px;background:#fff;border:.5px solid #dcdcdc;box-sizing:border-box;"></div>
<div class="" style="left:946.0px;top:506.2px;width:5.6px;height:6.4px;background:#fff;border:.5px solid #d6d6d6;box-sizing:border-box;"></div>
<svg style="left:947.90px;top:507.90px" width="1.8" height="3" viewBox="0 0 1.8 3"><polygon points="0,0 0,3 1.8,1.5" fill="#555"/></svg>
<div class="" style="left:0.0px;top:513.8px;width:960.0px;height:8.4px;background:#217346;"></div>
<span class="t l rb" style="left:3.0px;top:518.3px;font-size:4.3px;color:#e8f3ec;">준비</span>
<div class="" style="left:859.5px;top:514.2px;width:11.0px;height:7.6px;background:#1a5c38;"></div>
<div class="" style="left:862.6px;top:515.8px;width:4.8px;height:4.4px;border:.6px solid #7fb596;box-sizing:border-box;"></div>
<div class="" style="left:870.8px;top:514.2px;width:10.4px;height:7.6px;background:#2c7d50;"></div>
<div class="" style="left:873.4px;top:515.6px;width:5.0px;height:4.8px;background:#5e9f7c;border:.6px solid #a6ccb6;box-sizing:border-box;"></div>
<div class="" style="left:884.0px;top:515.4px;width:3.6px;height:3.0px;background:#d6eadf;"></div>
<div class="" style="left:884.0px;top:515.4px;width:0.7px;height:5.0px;background:#d6eadf;"></div>
<span class="t c rb" style="left:895.6px;top:517.9px;font-size:5px;color:#e8f3ec;">–</span>
<div class="" style="left:899.5px;top:517.7px;width:36.0px;height:0.6px;background:#9cc7ae;"></div>
<div class="" style="left:916.8px;top:516.8px;width:0.7px;height:2.2px;background:#cfe4d7;"></div>
<div class="" style="left:923.0px;top:515.6px;width:1.6px;height:4.8px;background:#e6f2ea;"></div>
<span class="t c rb" style="left:938.8px;top:517.9px;font-size:5.4px;color:#e8f3ec;">+</span>
<span class="t c rb" style="left:951.0px;top:518.0px;font-size:4.6px;color:#e8f3ec;">205 %</span>
<div class="" style="left:0.0px;top:522.1px;width:960.0px;height:18.0px;background:#1b2a12;"></div>
<div class="" style="left:241.0px;top:526.6px;width:3.9px;height:3.9px;background:linear-gradient(135deg,#6fd0fa,#2aa6ea);border-radius:.5px;"></div>
<div class="" style="left:246.0px;top:526.6px;width:3.9px;height:3.9px;background:linear-gradient(135deg,#6fd0fa,#2aa6ea);border-radius:.5px;"></div>
<div class="" style="left:241.0px;top:531.6px;width:3.9px;height:3.9px;background:linear-gradient(135deg,#6fd0fa,#2aa6ea);border-radius:.5px;"></div>
<div class="" style="left:246.0px;top:531.6px;width:3.9px;height:3.9px;background:linear-gradient(135deg,#6fd0fa,#2aa6ea);border-radius:.5px;"></div>
<div class="" style="left:255.6px;top:525.2px;width:37.0px;height:11.6px;background:#2a3920;border-radius:5.8px;"></div>
<div class="" style="left:267.2px;top:528.6px;width:3.0px;height:3.0px;border:.8px solid #e8e8e8;border-radius:50%;box-sizing:border-box;"></div>
<div class="" style="left:266.4px;top:531.7px;width:1.8px;height:0.8px;background:#e8e8e8;transform:rotate(-45deg);"></div>
<span class="t l rb" style="left:273.0px;top:530.8px;font-size:4.8px;color:#e0e0e0;">검색</span>
<svg style="left:0;top:522px" width="960" height="18" viewBox="0 522 960 18" font-family="Liberation Sans,sans-serif"><rect x="297.1" y="526.4" width="9.2" height="9.2" rx=".8" fill="#e9dad5"/><path d="M300.1 528.2c1.6-1 3 .2 2.6 1.8l1.2 3.8h-4.2l.8-3.2z" fill="#c23a44"/><circle cx="303.5" cy="529.6" r="1.1" fill="#f6eeee"/><rect x="313.6" y="526.4" width="9.2" height="9.2" rx="1" fill="#a80f16"/><path d="M319.0 527.6l-2.6 3.8h1.8l-1 3 3-4h-1.8z" fill="#fff"/><circle cx="334.7" cy="531" r="4.7" fill="#2d2270"/><rect x="332.1" y="528.4" width="5.2" height="5.2" rx="1.3" fill="#9486ea"/><circle cx="334.7" cy="531" r="1.1" fill="#fff"/><rect x="346.4" y="528" width="9.6" height="6" rx="1.2" fill="#2f8f3c"/><text x="351.2" y="532.7" font-size="4.4" font-weight="700" fill="#e6ffe0" text-anchor="middle">UB</text><circle cx="367.7" cy="531" r="4.8" fill="#0a0a0a"/><path d="M368.9 527.8l-1.8 6.4M366.1 530.6h3" stroke="#e8e8e8" stroke-width="1" fill="none"/><circle cx="384.2" cy="531" r="4.7" fill="#e6efe6"/><path d="M381.2 527.6l6 6.8M387.2 527.6l-6 6.8" stroke="#2f7d32" stroke-width="2.2"/><circle cx="384.2" cy="531" r="4.7" fill="none" stroke="#2a6a2c" stroke-width=".9"/><circle cx="400.7" cy="532" r="3.5" fill="#d6b45c"/><circle cx="399.9" cy="531" r="1.6" fill="#efe3b8"/><path d="M398.2 534.2h5" stroke="#8a8a8a" stroke-width=".9"/><circle cx="417.2" cy="531" r="4.7" fill="#12a150"/><path d="M417.2 528v2.6l-2.6 2.6M417.2 530.6l2.6 2.6" stroke="#fff" stroke-width="1.1" fill="none"/><rect x="429.2" y="526.4" width="9" height="9.2" fill="#ececec"/><rect x="429.2" y="530.4" width="9" height="1.4" fill="#2a2a2a"/><rect x="430.5" y="532.8" width="6.4" height="1.8" fill="#444"/><rect x="432.2" y="527.4" width="3" height="2" fill="#666"/><rect x="443.2" y="523" width="14" height="16" rx="2" fill="#34432b"/><rect x="445.9" y="526.8" width="8.6" height="8.4" rx=".6" fill="#1e7145"/><rect x="450.8" y="527.8" width="3.4" height="6.4" fill="#cfe5d8"/><text x="448.4" y="533.3" font-size="5.4" font-weight="700" fill="#fff" text-anchor="middle">X</text><rect x="447.5" y="537.3" width="5.4" height="1" rx=".5" fill="#8fb6dc"/><path d="M462.1 527.2h3.4l1 1.2h4.8v6.8h-9.2z" fill="#f2b630"/><rect x="462.1" y="530" width="9.2" height="5.2" fill="#fad25a"/><rect x="464.6" y="533.2" width="4.4" height="2" fill="#3b8de0"/><rect x="479.7" y="526.4" width="7.2" height="9.2" rx=".6" fill="#8194aa"/><rect x="480.7" y="527.4" width="5.2" height="2" fill="#dfe8f0"/><path d="M480.7 531h5.2M480.7 533h5.2" stroke="#c8d4e0" stroke-width="1" stroke-dasharray="1.2 .8"/><rect x="496.0" y="526.6" width="7.6" height="8.8" rx=".6" fill="#49b4de"/><rect x="497.2" y="528" width="5.2" height="5" fill="#d8ccaa"/><rect x="498.8" y="537.6" width="2" height=".8" fill="#9a9a9a"/><circle cx="516.3" cy="531" r="4.7" fill="#5865f2"/><path d="M513.7 529.4q2.6-1 5.2 0l.8 3.2q-3.4 1.4-6.8 0z" fill="#fff"/><circle cx="515.2" cy="531.2" r=".6" fill="#5865f2"/><circle cx="517.4" cy="531.2" r=".6" fill="#5865f2"/><circle cx="532.8" cy="531" r="4.7" fill="#14284a"/><circle cx="534.4" cy="529.8" r="1.5" fill="none" stroke="#fff" stroke-width=".9"/><path d="M530.2 532.6l3.4-1.6" stroke="#fff" stroke-width="1.4"/><circle cx="530.8" cy="532.8" r="1.1" fill="#fff"/><rect x="544.7" y="526.4" width="9.2" height="9.2" rx=".8" fill="#0d0d0d"/><text x="549.3" y="532.4" font-size="4" font-weight="700" fill="#e8e8e8" text-anchor="middle">PS</text><circle cx="565.8" cy="531" r="4.7" fill="#1a6fe0"/><path d="M564.4 528.6v4.8l4-2.4z" fill="#fff"/><circle cx="582.3" cy="531" r="4.7" fill="#e8b62c"/><path d="M582.3 531L578.3 528.2A4.7 4.7 0 0 1 586.3 528.2z" fill="#d93025"/><path d="M582.3 526.4a4.7 4.7 0 0 1 4 2.2h-4z" fill="#d93025"/><path d="M582.3 531l-4.2-2.4a4.7 4.7 0 0 0 3 6.9z" fill="#2e9a48"/><circle cx="582.3" cy="531" r="2.1" fill="#fff"/><circle cx="582.3" cy="531" r="1.5" fill="#2f7de0"/><rect x="581.3" y="537.6" width="2" height=".8" fill="#9a9a9a"/><path d="M600.8 526.6q-4 .4-3 3.4q.8 1.6-.6 5.2" stroke="#13a3a3" stroke-width="2.4" fill="none" stroke-linecap="round"/><rect x="610.5" y="527.6" width="9.6" height="6.8" rx="1.8" fill="#e0100f"/><path d="M614.3 529.4v3.2l2.8-1.6z" fill="#fff"/><defs><linearGradient id="gg" x1="0" y1="0" x2="1" y2="1"><stop offset="0" stop-color="#d42fb0"/><stop offset=".5" stop-color="#f7a13a"/><stop offset="1" stop-color="#f4ee5a"/></linearGradient></defs><rect x="627.2" y="526.4" width="9.2" height="9.2" rx=".8" fill="url(#gg)"/><rect x="643.7" y="526.4" width="9.2" height="9.2" rx=".6" fill="#e8dfd0"/><path d="M644.9 527.4h3.6v4h-3.6z" fill="#5a4444"/><rect x="648.9" y="531.6" width="3.2" height="3.6" fill="#f6efe6"/><rect x="647.3" y="537.6" width="2" height=".8" fill="#9a9a9a"/><rect x="660.2" y="526.4" width="9.2" height="9.2" rx=".6" fill="#dcb4be"/><circle cx="664.8" cy="530.6" r="2.4" fill="#f4e6e2"/><path d="M662.3 528.6h5" stroke="#8a5a66" stroke-width="1.2"/><rect x="676.7" y="526.4" width="9.2" height="9.2" rx=".6" fill="#2c2c36"/><circle cx="681.7" cy="530.8" r="2.2" fill="#dcdce4"/><path d="M678.8 534.4h5" stroke="#8a8a96" stroke-width="1.4"/><rect x="693.2" y="526.4" width="9.2" height="9.2" rx=".6" fill="#d49c6c"/><circle cx="697.8" cy="531" r="2.6" fill="#fdf3e6"/><rect x="709.7" y="526.4" width="9.2" height="9.2" rx=".6" fill="#262626"/><path d="M712.3 534.4l2-6 2 6M713.1 532.6h2.4" stroke="#c8c8c8" stroke-width=".9" fill="none"/></svg>
<span class="t c rb" style="left:870.6px;top:531.0px;font-size:7px;color:#e8e8e8;">˄</span>
<span class="t c rb" style="left:880.0px;top:531.0px;font-size:4.6px;color:#c8c8c8;">⟨⟩</span>
<span class="t c rb" style="left:890.0px;top:531.0px;font-size:6.6px;color:#f2f2f2;font-weight:700;">A</span>
<div class="" style="left:899.0px;top:527.8px;width:5.6px;height:4.6px;border:.8px solid #e8e8e8;box-sizing:border-box;"></div>
<span class="t c rb" style="left:911.0px;top:531.0px;font-size:4.6px;color:#e8e8e8;">◁)</span>
<span class="t c rb" style="left:933.8px;top:528.0px;font-size:4.6px;color:#f0f0f0;">오후 8:32</span>
<span class="t c rb" style="left:933.8px;top:534.4px;font-size:4.6px;color:#f0f0f0;">2024-08-07</span>
<span class="t c rb" style="left:949.8px;top:531.0px;font-size:6px;color:#f0f0f0;">☽</span>
<svg style="left:154.5px;top:368px" width="8" height="13" viewBox="0 0 8 13"><path d="M.3 .3V9.6L2.6 7.6L4.4 11.8L6 11.1L4.3 7H7Z" fill="#c9a27c" stroke="#3a4a66" stroke-width=".5"/><path d="M3.4 7.4L5 11.3L6 10.9L4.4 7.1Z" fill="#fff"/></svg>
</div></div></body></html>
